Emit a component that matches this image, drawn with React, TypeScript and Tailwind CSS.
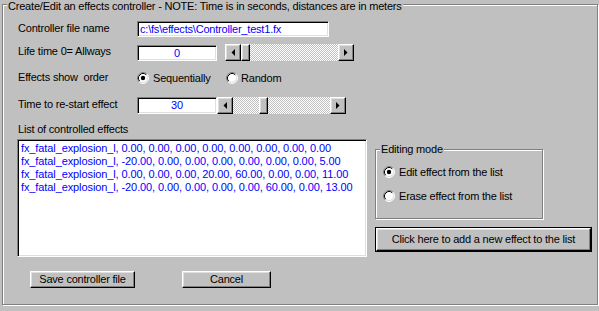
import React from 'react';

const sunken =
  'border border-t-[#808080] border-l-[#808080] border-b-white border-r-white shadow-[inset_1px_1px_0_#000,inset_-1px_-1px_0_#dfdfdf] bg-white';
const raised =
  'border border-t-white border-l-white border-b-black border-r-black shadow-[inset_-1px_-1px_0_#808080,inset_1px_1px_0_#dfdfdf] bg-[#c0c0c0]';

const effects = [
  'fx_fatal_explosion_l, 0.00, 0.00, 0.00, 0.00, 0.00, 0.00, 0.00, 0.00',
  'fx_fatal_explosion_l, -20.00, 0.00, 0.00, 0.00, 0.00, 0.00, 0.00, 5.00',
  'fx_fatal_explosion_l, 0.00, 0.00, 0.00, 20.00, 60.00, 0.00, 0.00, 11.00',
  'fx_fatal_explosion_l, -20.00, 0.00, 0.00, 0.00, 0.00, 60.00, 0.00, 13.00',
];

function Radio({ checked }: { checked?: boolean }) {
  return (
    <svg width="12" height="12" viewBox="0 0 12 12" className="shrink-0">
      <circle cx="6" cy="6" r="5" fill="#fff" />
      <path d="M2.11 9.89 A5.5 5.5 0 0 1 9.89 2.11" fill="none" stroke="#808080" />
      <path d="M9.89 2.11 A5.5 5.5 0 0 1 2.11 9.89" fill="none" stroke="#fff" />
      <path d="M2.82 9.18 A4.5 4.5 0 0 1 9.18 2.82" fill="none" stroke="#000" />
      <path d="M9.18 2.82 A4.5 4.5 0 0 1 2.82 9.18" fill="none" stroke="#dfdfdf" />
      {checked && <circle cx="6" cy="6" r="2.2" fill="#000" />}
    </svg>
  );
}

function Arrow({ dir }: { dir: 'left' | 'right' }) {
  return (
    <svg width="4" height="7" viewBox="0 0 4 7">
      <polygon points={dir === 'left' ? '4,0 4,7 0.5,3.5' : '0,0 0,7 3.5,3.5'} fill="#000" />
    </svg>
  );
}

function ScrollBar({ width, thumb }: { width: string; thumb: string }) {
  return (
    <div className={`flex h-[17px] ${width}`}>
      <div className={`${raised} w-[16px] h-full flex items-center justify-center`}>
        <Arrow dir="left" />
      </div>
      <div className="flex-1 h-full bg-[repeating-conic-gradient(#fff_0_25%,#c0c0c0_0_50%)] bg-[length:2px_2px]">
        <div className={`${raised} w-[9px] h-full ${thumb}`} />
      </div>
      <div className={`${raised} w-[16px] h-full flex items-center justify-center`}>
        <Arrow dir="right" />
      </div>
    </div>
  );
}

export default function App() {
  return (
    <div className="w-[599px] h-[311px] bg-[#c0c0c0] overflow-hidden font-['Liberation_Sans',Arial,sans-serif] text-[11px] leading-[13px] tracking-[-0.2px] text-black">
      <div className="relative mt-[4px] ml-[2px] w-[596px] h-[301px] border border-[#808080] shadow-[1px_1px_0_#fff,inset_1px_1px_0_#fff]">
        <span className="absolute left-[4px] -top-[5px] px-[1px] bg-[#c0c0c0] whitespace-nowrap">
          Create/Edit an effects controller - NOTE: Time is in seconds, distances are in meters
        </span>

        <div className="flex flex-col pl-[15px] pt-[16px]">
          {/* file name */}
          <div className="flex items-center h-[16px]">
            <span className="w-[119px] whitespace-nowrap -mt-[2px]">Controller file name</span>
            <div className={`${sunken} w-[192px] h-[16px] pl-[2px] pt-[1px] text-[#0000ff] whitespace-nowrap`}>
              c:\fs\effects\Controller_test1.fx
            </div>
          </div>

          {/* life time */}
          <div className="flex items-center h-[17px] mt-[7px]">
            <span className="w-[119px] whitespace-nowrap -mt-[2px]">Life time 0= Allways</span>
            <div className={`${sunken} w-[80px] h-[16px] pt-[1px] text-center text-[#0000ff]`}>0</div>
            <div className="ml-[8px]">
              <ScrollBar width="w-[129px]" thumb="ml-0" />
            </div>
          </div>

          {/* order */}
          <div className="flex items-center h-[12px] mt-[11px]">
            <span className="w-[119px] whitespace-nowrap -mt-[2px]">Effects show&nbsp; order</span>
            <div className="flex items-center gap-[4px] w-[89px]">
              <Radio checked />
              <span>Sequentially</span>
            </div>
            <div className="flex items-center gap-[3px]">
              <Radio />
              <span>Random</span>
            </div>
          </div>

          {/* restart */}
          <div className="flex items-center h-[17px] mt-[13px]">
            <span className="w-[119px] whitespace-nowrap -mt-[2px]">Time to re-start effect</span>
            <div className={`${sunken} w-[80px] h-[17px] pt-[1px] text-center text-[#0000ff]`}>30</div>
            <ScrollBar width="w-[129px]" thumb="ml-[26px]" />
          </div>

          <div className="mt-[9px] h-[14px] whitespace-nowrap">List of controlled effects</div>

          <div className="flex mt-[2px]">
            <div className={`${sunken} -ml-[1px] w-[350px] h-[118px] pl-[3px] pt-[2px] text-[#0000ff] tracking-[-0.1px]`}>
              {effects.map((e) => (
                <div key={e} className="whitespace-nowrap">{e}</div>
              ))}
            </div>

            <div className="flex flex-col ml-[8px] mt-[10px]">
              <div className="relative w-[168px] h-[70px] border border-[#808080] shadow-[1px_1px_0_#fff,inset_1px_1px_0_#fff]">
                <span className="absolute left-[4px] -top-[7px] px-[1px] bg-[#c0c0c0] whitespace-nowrap">Editing mode</span>
                <div className="flex flex-col gap-[12px] pl-[7px] pt-[16px]">
                  <div className="flex items-center gap-[4px] h-[12px]">
                    <Radio checked />
                    <span className="whitespace-nowrap">Edit effect from the list</span>
                  </div>
                  <div className="flex items-center gap-[4px] h-[12px]">
                    <Radio />
                    <span className="whitespace-nowrap">Erase effect from the list</span>
                  </div>
                </div>
              </div>
              <div className="mt-[8px] w-[217px] h-[25px] border border-black">
                <button className={`${raised} w-full h-full flex items-center justify-center whitespace-nowrap`}>
                  Click here to add a new effect to the list
                </button>
              </div>
            </div>
          </div>

          <div className="flex mt-[14px] ml-[12px] gap-[47px]">
            <button className={`${raised} w-[105px] h-[17px] flex items-center justify-center whitespace-nowrap`}>
              Save controller file
            </button>
            <button className={`${raised} w-[89px] h-[17px] flex items-center justify-center`}>
              Cancel
            </button>
          </div>
        </div>
      </div>
    </div>
  );
}
